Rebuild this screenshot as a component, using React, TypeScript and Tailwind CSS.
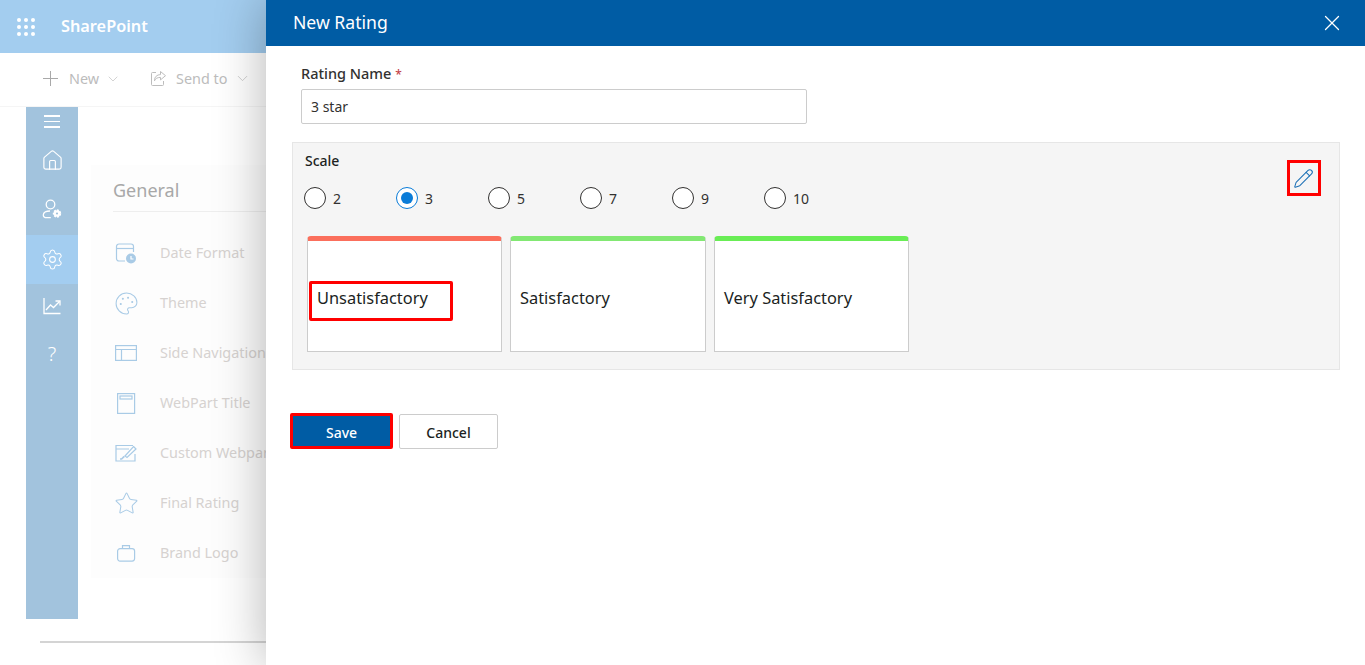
import { ChevronDown, House, Palette, Pencil, Settings, Star, X } from "lucide-react";

const font = "font-['Noto_Sans','Open_Sans',sans-serif]";

const scaleOptions = ["2", "3", "5", "7", "9", "10"];

const ratings = [
  { label: "Unsatisfactory", bar: "border-t-[#fb6f5c] w-[195px]", boxed: true },
  { label: "Satisfactory", bar: "border-t-[#82e873] w-[196px]", boxed: false },
  { label: "Very Satisfactory", bar: "border-t-[#69ed55] w-[195px]", boxed: false },
];

function Waffle() {
  const dots = [2, 9, 16];
  return (
    <svg width="18" height="18" viewBox="0 0 18 18" fill="#fff">
      {dots.map((y) => dots.map((x) => <circle key={`${x}-${y}`} cx={x} cy={y} r="2" />))}
    </svg>
  );
}

function PlusIcon() {
  return (
    <svg width="15" height="15" viewBox="0 0 15 15" fill="none" stroke="#a9a9a9" strokeWidth="1">
      <path d="M7.500 0v15M0 7.500h15" />
    </svg>
  );
}

function SendToIcon() {
  return (
    <svg width="17" height="17" viewBox="0 0 17 17" fill="none" stroke="#bdbdbd" strokeWidth="1">
      <path d="M6 2.500H2.500a1 1 0 0 0-1 1v11a1 1 0 0 0 1 1h10a1 1 0 0 0 1-1V11" />
      <path d="M10.500 1.500l5 4.200-5 4.200V7.400c-3 0-5 1-6 3.400 0-4 2.400-6 6-6.200z" />
    </svg>
  );
}

function UserGearIcon() {
  return (
    <svg width="20" height="20" viewBox="0 0 20 20" fill="none" stroke="#fff" strokeWidth="1.300">
      <circle cx="8.500" cy="5.500" r="4.300" />
      <path d="M8 12c-3.500 0-6.700 1.200-6.700 4 0 1.500 1.500 2.700 3.500 2.700h4" />
      <circle cx="15" cy="14.500" r="3.300" fill="#fff" stroke="#fff" strokeDasharray="2 1" strokeWidth="1.800" />
      <circle cx="15" cy="14.500" r="1.100" fill="#a2c3dd" stroke="none" />
    </svg>
  );
}

function ChartIcon() {
  return (
    <svg width="18" height="18" viewBox="0 0 18 18" fill="none" stroke="#fff" strokeWidth="1.300">
      <path d="M1 1v15.500h16.500" />
      <path d="M3 13l4.500-5 3 2.500L16.500 4.500" />
      <path d="M12.500 4h4.500v4.500" />
    </svg>
  );
}

const iconBlue = "#a9cbe6";

function DateIcon() {
  return (
    <svg width="22" height="22" viewBox="0 0 22 22" fill="none" stroke={iconBlue} strokeWidth="1.200">
      <path d="M10 19H4a2.500 2.500 0 0 1-2.500-2.500v-12A2.500 2.500 0 0 1 4 2h12a2.500 2.500 0 0 1 2.500 2.500V10" />
      <path d="M1.500 6.500h17" />
      <circle cx="16" cy="16.500" r="5" fill={iconBlue} stroke="none" />
      <path d="M16 14v3h2.500" stroke="#fff" />
    </svg>
  );
}

function SideNavIcon() {
  return (
    <svg width="22" height="16" viewBox="0 0 22 16" fill="none" stroke={iconBlue} strokeWidth="1.200">
      <rect x="0.600" y="0.600" width="20.800" height="14.800" />
      <path d="M0.600 4.500h20.800M6.500 4.500v11" />
    </svg>
  );
}

function TitleIcon() {
  return (
    <svg width="22" height="22" viewBox="0 0 22 22" fill="none" stroke={iconBlue} strokeWidth="1.200">
      <rect x="2.600" y="1.600" width="17" height="19.800" />
      <rect x="5" y="4" width="12" height="3" />
    </svg>
  );
}

function WebpartIcon() {
  return (
    <svg width="22" height="18" viewBox="0 0 22 18" fill="none" stroke={iconBlue} strokeWidth="1.200">
      <path d="M20 10v7H1V1.500h17M1 5h13" />
      <path d="M18.500 2.500l2.500 2.500L12 13.500l-2-1.500z" />
      <path d="M9.500 12.500c-1.500.5-2 2-3 2.500H5" strokeWidth="1.600" />
    </svg>
  );
}

function CaseIcon() {
  return (
    <svg width="20" height="18" viewBox="0 0 20 18" fill="none" stroke={iconBlue} strokeWidth="1.200">
      <rect x="1.600" y="4.600" width="17" height="12.500" rx="2.500" />
      <path d="M6.500 4.500V1.600h7v2.900" />
    </svg>
  );
}

const navRows = [
  { label: "Date Format", icon: <DateIcon /> },
  { label: "Theme", icon: <Palette size={25} strokeWidth={1} color={iconBlue} /> },
  { label: "Side Navigation", icon: <SideNavIcon /> },
  { label: "WebPart Title", icon: <TitleIcon /> },
  { label: "Custom Webpart", icon: <WebpartIcon /> },
  { label: "Final Rating", icon: <Star size={25} strokeWidth={1} color={iconBlue} /> },
  { label: "Brand Logo", icon: <CaseIcon /> },
];

function Background() {
  return (
    <div className="flex h-full w-[266px] flex-col">
      <div className="flex h-[53px] shrink-0 items-center bg-[#a3cdef] pl-[17px]">
        <Waffle />
        <span className="ml-[26px] text-[16.300px] font-semibold text-white">SharePoint</span>
      </div>
      <div className="flex h-[54px] shrink-0 items-center whitespace-nowrap border-b border-[#f5f5f5] pb-[2px] pl-[43px] text-[14.400px] text-[#bcbcbc]">
        <PlusIcon />
        <span className="ml-[11px]">New</span>
        <ChevronDown size={16} strokeWidth={1} className="ml-[6px]" />
        <span className="ml-[29px]"><SendToIcon /></span>
        <span className="ml-[9px]">Send to</span>
        <ChevronDown size={17} strokeWidth={1} className="ml-[7px]" />
      </div>
      <div className="flex min-h-0 flex-1 pl-[26px]">
        <div className="flex h-[512px] w-[52px] shrink-0 flex-col items-center bg-[#a2c3dd] text-white">
          <div className="mt-[8px] flex flex-col gap-[4px]">
            <span className="h-[1.500px] w-[16px] bg-white" />
            <span className="h-[1.500px] w-[16px] bg-white" />
            <span className="h-[1.500px] w-[16px] bg-white" />
          </div>
          <div className="mt-[21.500px]"><House size={23} strokeWidth={1.2} /></div>
          <div className="mt-[27px]"><UserGearIcon /></div>
          <div className="mt-[16px] flex h-[49px] w-full items-center justify-center bg-[#a3cdf0]"><Settings size={23} strokeWidth={1.1} /></div>
          <div className="mt-[13px]"><ChartIcon /></div>
          <span className="mt-[25px] text-[20px] leading-[28px] font-light">?</span>
        </div>
        <div className="ml-[13px] mt-[58px] h-[413px] flex-1 overflow-hidden bg-[#fdfdfd] pl-[22px]">
          <div className="h-[47px] whitespace-nowrap border-b border-[#eeeeee] pt-[10px] text-[18px] leading-[30px] text-[#a8a8a8]">General</div>
          <div className="mt-[16px]">
            {navRows.map((row) => (
              <div key={row.label} className="flex h-[50px] items-center whitespace-nowrap text-[14.400px] text-[#d6d2d0]">
                <span className="flex w-[47px] shrink-0 justify-center pr-[21px]">{row.icon}</span>
                {row.label}
              </div>
            ))}
          </div>
        </div>
      </div>
    </div>
  );
}

function RadioDot({ checked }: { checked: boolean }) {
  if (checked) {
    return (
      <span className="flex h-[22px] w-[22px] items-center justify-center rounded-full border border-[#0a7cd8] bg-white">
        <span className="h-[12px] w-[12px] rounded-full bg-[#0a7cd8]" />
      </span>
    );
  }
  return <span className="h-[22px] w-[22px] rounded-full border border-[#323130] bg-white" />;
}

export default function App() {
  return (
    <div className={`relative h-[665px] w-[1365px] overflow-hidden bg-white ${font}`}>
      <Background />
      <div className="absolute bottom-[22px] left-[40px] h-[2px] w-[240px] bg-[#d4d4d4]" />

      <div className="absolute inset-y-0 right-0 flex w-[1099px] flex-col bg-white shadow-[0_0_48px_rgba(0,0,0,0.3)]">
        <div className="flex h-[46px] shrink-0 items-center justify-between bg-[#005ca4] pl-[27px] pr-[20px] text-white">
          <span className="pb-[2px] text-[17.600px]">New Rating</span>
          <X size={26} strokeWidth={1.200} />
        </div>

        <div className="pl-[35px] pt-[17px]">
          <label className="block h-[21px] text-[14.500px] font-medium leading-[20px] text-[#323130]">
            Rating Name <span className="text-[12px] text-[#c4434b]">*</span>
          </label>
          <input
            readOnly
            value="3 star"
            className="mt-[5px] block h-[35px] w-[506px] rounded-[2px] border border-[#cccccc] pl-[9px] text-[14px] text-[#323130]"
          />
        </div>

        <div className="ml-[26px] mr-[25px] mt-[18px] flex h-[228px] flex-col border border-[#e6e6e6] bg-[#f5f5f5] pl-[11px]">
          <div className="flex items-start justify-between">
            <span className="pl-[1px] pt-[8px] text-[14px] font-medium leading-[20px] text-[#201f1e]">Scale</span>
            <span className="mr-[18px] mt-[17px] flex h-[36px] w-[34px] items-center justify-center border-[3px] border-[#ff0000]">
              <Pencil size={21} strokeWidth={1.150} color="#1a6fb5" className="-translate-x-px" />
            </span>
          </div>
          <div className="-mt-[9px] flex">
            {scaleOptions.map((opt) => (
              <div key={opt} className="flex w-[92px] items-center gap-[7px] text-[14px] text-[#323130]">
                <RadioDot checked={opt === "3"} />
                {opt}
              </div>
            ))}
          </div>
          <div className="ml-[3px] mt-[27px] flex gap-[8px]">
            {ratings.map((r) => (
              <div
                key={r.label}
                className={`flex h-[116px] items-center rounded-t-[4px] border border-t-[5px] border-[#cccccc] bg-white text-[16.400px] text-[#201f1e] ${r.bar}`}
              >
                {r.boxed ? (
                  <span className="ml-[1px] mt-[10px] flex h-[40px] w-[144px] items-center rounded-[2px] border-[3px] border-[#ff0000] pb-[6px] pl-[5px]">{r.label}</span>
                ) : (
                  <span className="ml-[9px] mt-[5px]">{r.label}</span>
                )}
              </div>
            ))}
          </div>
        </div>

        <div className="ml-[24px] mt-[43px] flex items-center gap-[6px] text-[14px]">
          <button className="h-[36px] w-[103px] rounded-[2px] border-[3px] border-[#ff0000] bg-[#005ca4] pt-[3px] font-medium text-white">Save</button>
          <button className="h-[35px] w-[99px] rounded-[2px] border border-[#cccccc] bg-white pt-[3px] font-medium text-[#201f1e]">Cancel</button>
        </div>
      </div>
    </div>
  );
}
